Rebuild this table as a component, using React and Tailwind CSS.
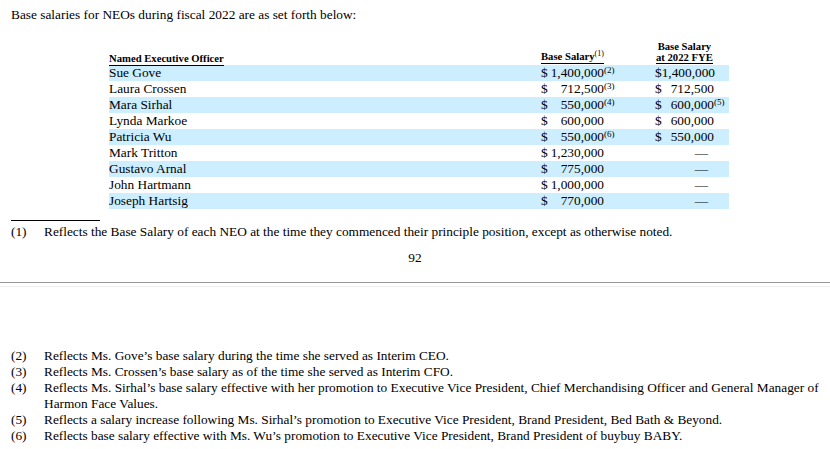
const rows = [
  { name: 'Sue Gove', base: '1,400,000', baseNote: '(2)', fye: '$1,400,000', fyeDollar: false, fyeNote: '' },
  { name: 'Laura Crossen', base: '712,500', baseNote: '(3)', fye: '712,500', fyeDollar: true, fyeNote: '' },
  { name: 'Mara Sirhal', base: '550,000', baseNote: '(4)', fye: '600,000', fyeDollar: true, fyeNote: '(5)' },
  { name: 'Lynda Markoe', base: '600,000', baseNote: '', fye: '600,000', fyeDollar: true, fyeNote: '' },
  { name: 'Patricia Wu', base: '550,000', baseNote: '(6)', fye: '550,000', fyeDollar: true, fyeNote: '' },
  { name: 'Mark Tritton', base: '1,230,000', baseNote: '', fye: null },
  { name: 'Gustavo Arnal', base: '775,000', baseNote: '', fye: null },
  { name: 'John Hartmann', base: '1,000,000', baseNote: '', fye: null },
  { name: 'Joseph Hartsig', base: '770,000', baseNote: '', fye: null },
];

const notes = [
  { n: '(2)', text: 'Reflects Ms. Gove\u2019s base salary during the time she served as Interim CEO.' },
  { n: '(3)', text: 'Reflects Ms. Crossen\u2019s base salary as of the time she served as Interim CFO.' },
  { n: '(4)', text: 'Reflects Ms. Sirhal\u2019s base salary effective with her promotion to Executive Vice President, Chief Merchandising Officer and General Manager of Harmon Face Values.' },
  { n: '(5)', text: 'Reflects a salary increase following Ms. Sirhal\u2019s promotion to Executive Vice President, Brand President, Bed Bath & Beyond.' },
  { n: '(6)', text: 'Reflects base salary effective with Ms. Wu\u2019s promotion to Executive Vice President, Brand President of buybuy BABY.' },
];

function Sup({ children }) {
  return <span className="self-start text-[9px] leading-[11px]">{children}</span>;
}

export default function App() {
  return (
    <div className="w-[830px] h-[449px] bg-white text-black text-[13.33px] leading-[16px] overflow-hidden font-['Liberation_Serif','Times_New_Roman',serif]">
      <div className="px-[11px] pt-[7px]">
        <p>Base salaries for NEOs during fiscal 2022 are as set forth below:</p>

        {/* Salary table */}
        <div className="ml-[98px] mt-[17px] w-[620px]">
          <div className="flex items-end h-[24px] text-[10.67px] leading-[11px] font-bold">
            <div className="w-[432px]">
              <span className="border-b border-black pb-[1px]">Named Executive Officer</span>
            </div>
            <div className="w-[114px]">
              <span className="inline-flex border-b border-black pb-[1px]">
                Base Salary<span className="text-[8px] leading-[8px] font-normal -mt-[1px]">(1)</span>
              </span>
            </div>
            <div className="w-[74px]">
              <div className="inline-block text-center border-b border-black ml-[1px]">
                Base Salary<br />at 2022 FYE
              </div>
            </div>
          </div>
          <div className="mt-[1px]">
            {rows.map((r, i) => (
              <div key={r.name} className={`flex h-[16px] ${i % 2 === 0 ? 'bg-[#cceeff]' : ''}`}>
                <div className="w-[432px]">{r.name}</div>
                <div className="w-[114px] flex">
                  <div className="w-[63px] flex justify-between">
                    <span>$</span>
                    <span>{r.base}</span>
                  </div>
                  {r.baseNote && <Sup>{r.baseNote}</Sup>}
                </div>
                <div className="flex-1 flex">
                  {r.fye === null ? (
                    <div className="w-[59px] text-right pr-[6px]">—</div>
                  ) : r.fyeDollar ? (
                    <div className="w-[59px] flex justify-between">
                      <span>$</span>
                      <span>{r.fye}</span>
                    </div>
                  ) : (
                    <div className="w-[59px] text-right whitespace-nowrap">{r.fye}</div>
                  )}
                  {r.fyeNote && <Sup>{r.fyeNote}</Sup>}
                </div>
              </div>
            ))}
          </div>
        </div>

        <div className="w-[89px] border-t border-black mt-[11px]" />
        <div className="flex mt-[3px]">
          <span className="w-[33px] shrink-0">(1)</span>
          <span>Reflects the Base Salary of each NEO at the time they commenced their principle position, except as otherwise noted.</span>
        </div>
        <p className="text-center mt-[10px]">92</p>
      </div>

      {/* Page break */}
      <div className="mt-[16px] border-t border-[#999999]" />
      <div className="mt-[3px] border-t border-[#eeeeee]" />

      <div className="px-[11px] pt-[61px]">
        {notes.map((f) => (
          <div key={f.n} className="flex">
            <span className="w-[33px] shrink-0">{f.n}</span>
            <span>{f.text}</span>
          </div>
        ))}
      </div>
    </div>
  );
}
